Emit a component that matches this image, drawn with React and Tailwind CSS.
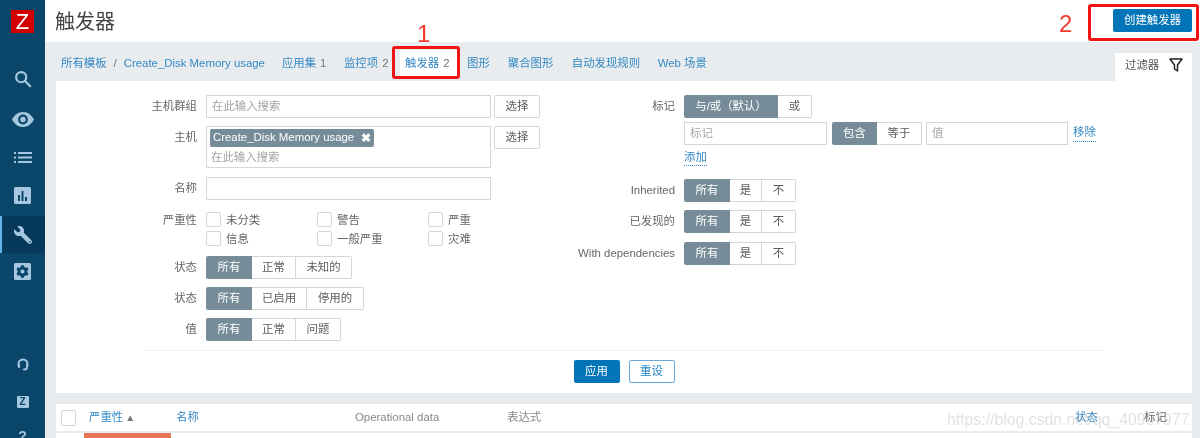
import React from "react";
import { FaWrench, FaCog } from "react-icons/fa";

const Seg = ({ items, mt = "" }) => (
  <div className={`flex h-[23px] ${mt}`}>
    {items.map(([t, w], i) => (
      <div
        key={t}
        style={{ width: w }}
        className={
          i === 0
            ? "flex items-center justify-center rounded-l-[2px] bg-[#768d99] text-white"
            : "flex items-center justify-center border border-l-0 border-[#d3d7d9] bg-white text-[#5c5c5c] last:rounded-r-[2px]"
        }
      >
        {t}
      </div>
    ))}
  </div>
);

const Label = ({ children, w }) => (
  <div className={`${w} shrink-0 pt-[3px] pr-[9px] text-right leading-[17px] text-[#666]`}>{children}</div>
);

const Row = ({ label, w = "w-[150px]", mt = "", children }) => (
  <div className={`flex ${mt}`}>
    <Label w={w}>{label}</Label>
    {children}
  </div>
);

const Input = ({ className = "", ph }) => (
  <div className={`flex h-[23px] items-center border border-[#d3d7d9] bg-white px-[5px] text-[#a5a5a5] ${className}`}>{ph}</div>
);

const Btn = ({ children }) => (
  <div className="ml-[3px] flex h-[23px] w-[46px] items-center justify-center rounded-[2px] border border-[#d3d7d9] bg-white text-[#5c5c5c]">
    {children}
  </div>
);

const Check = ({ t }) => (
  <div className="flex h-[19px] w-[111px] items-start">
    <div className="h-[15px] w-[15px] rounded-[2px] border border-[#d3d7d9] bg-white" />
    <span className="ml-[5px] leading-[16px] text-[#666]">{t}</span>
  </div>
);

const Tab = ({ children, active }) => (
  <div
    className={
      active
        ? "flex h-[27px] items-center bg-white pl-[5px] pr-[7px] text-[#3489c4]"
        : "flex h-[27px] items-center px-[5px] text-[#3489c4]"
    }
  >
    {children}
  </div>
);

const Num = ({ children }) => <span className="ml-[4px] text-[#777]">{children}</span>;

function Sidebar() {
  const c = "#a5c8e0";
  return (
    <div className="flex h-full w-[45px] shrink-0 flex-col items-center overflow-hidden bg-[#0a466a] [&>*]:shrink-0">
      <div className="mt-[10px] flex h-[23px] w-[23px] items-center justify-center bg-[#d40000] [font-family:'Liberation_Sans',sans-serif] text-[22px] leading-none text-white">
        Z
      </div>
      <svg className="mt-[37px]" width="18" height="18" viewBox="0 0 20 20" fill="none" stroke={c} strokeWidth="2.4">
        <circle cx="8" cy="8" r="5.6" />
        <path d="M12 12l6 6" strokeLinecap="round" />
      </svg>
      <svg className="mt-[24px]" width="22" height="15" viewBox="0 0 22 15" fill={c}>
        <path fillRule="evenodd" d="M11 0C5.8 0 2 3.6 0 7.5 2 11.400 5.800 15 11 15s9-3.600 11-7.500C20 3.600 16.200 0 11 0zm0 2.600a4.900 4.900 0 110 9.800 4.900 4.900 0 010-9.800z" />
        <circle cx="11" cy="7.500" r="2.700" />
      </svg>
      <svg className="mt-[25px]" width="18" height="11" viewBox="0 0 18 11" fill={c}>
        <rect x="0" y="0" width="2" height="2" />
        <rect x="4" y="0" width="14" height="2" />
        <rect x="0" y="4.500" width="2" height="2" />
        <rect x="4" y="4.500" width="14" height="2" />
        <rect x="0" y="9" width="2" height="2" />
        <rect x="4" y="9" width="14" height="2" />
      </svg>
      <svg className="mt-[24px]" width="17" height="17" viewBox="0 0 17 17">
        <rect width="17" height="17" rx="1.500" fill={c} />
        <rect x="4" y="8" width="2" height="6" fill="#0a466a" />
        <rect x="7.500" y="4" width="2" height="10" fill="#0a466a" />
        <rect x="11" y="10" width="2" height="4" fill="#0a466a" />
      </svg>
      <div className="mt-[12px] flex h-[37px] w-full items-center justify-center border-l-2 border-[#5fb5ea] bg-[#073a5a] pr-[2px]">
        <FaWrench size={18} color={c} className="-scale-x-100" />
      </div>
      <div className="mt-[10px] flex h-[17px] w-[17px] items-center justify-center rounded-[1.500px] bg-[#a5c8e0]">
        <FaCog size={13} color="#0a466a" />
      </div>
      <svg className="mt-[78px]" width="12" height="13" viewBox="0 0 12 13" fill="none" stroke={c} strokeWidth="2">
        <path d="M1.500 8V6a4.500 4.500 0 019 0v2" />
        <path d="M2 7v2M10 7v2M10 9.500c0 1.500-1.500 2-3 2" strokeLinecap="round" />
      </svg>
      <div className="mt-[25px] flex h-[12px] w-[12px] items-center justify-center rounded-[1px] bg-[#a5c8e0] [font-family:'Liberation_Sans',sans-serif] text-[10px] font-bold leading-none text-[#0a466a]">
        Z
      </div>
      <div className="mt-[21px] [font-family:'Liberation_Sans',sans-serif] text-[14px] font-bold leading-none text-[#a5c8e0]">?</div>
    </div>
  );
}

export default function App() {
  return (
    <div className="relative flex h-[438px] w-[1200px] overflow-hidden bg-[#e9ecee] [font-family:'Liberation_Sans','Noto_Sans_CJK_SC',sans-serif] text-[11.4px] blur-[0.5px]">
      <Sidebar />
      <div className="flex min-w-0 flex-1 flex-col">
        {/* header */}
        <div className="flex h-[42px] shrink-0 items-start justify-between bg-white pl-[10px] pr-[8px]">
          <div className="mt-[8px] text-[20px] leading-[28px] text-[#444]">触发器</div>
          <div className="mt-[9px] flex h-[23px] w-[79px] items-center justify-center rounded-[2px] bg-[#0275b8] text-white">
            创建触发器
          </div>
        </div>

        {/* tabs */}
        <div className="ml-[11px] mr-[8px] flex h-[39px] shrink-0 items-end justify-between">
          <div className="mb-[4px] flex items-center">
            <Tab>所有模板</Tab>
            <span className="mx-[2px] text-[#777]">/</span>
            <Tab>Create_Disk Memory usage</Tab>
            <div className="w-[7px]" />
            <Tab>
              应用集<Num>1</Num>
            </Tab>
            <div className="w-[7.5px]" />
            <Tab>
              监控项<Num>2</Num>
            </Tab>
            <div className="w-[6.5px]" />
            <Tab active>
              触发器<Num>2</Num>
            </Tab>
            <div className="w-[5.5px]" />
            <Tab>图形</Tab>
            <div className="w-[8px]" />
            <Tab>聚合图形</Tab>
            <div className="w-[8.4px]" />
            <Tab>自动发现规则</Tab>
            <div className="w-[7.6px]" />
            <Tab>Web 场景</Tab>
          </div>
          <div className="flex h-[28px] w-[77px] items-center justify-between bg-white pb-[3px] pl-[10px] pr-[9px] text-[#555]">
            过滤器
            <svg className="-mt-[2px]" width="14" height="14" viewBox="0 0 14 14" fill="none" stroke="#222" strokeWidth="1.500" strokeLinejoin="round">
              <path d="M1 1h12L8.500 7v6L5.500 11V7z" />
            </svg>
          </div>
        </div>

        {/* filter panel */}
        <div className="ml-[11px] mr-[8px] shrink-0 bg-white pb-[10px] pt-[14px]">
          <div className="flex">
            <div className="w-[484px] shrink-0">
              <Row label="主机群组" w="w-[150px]">
                <Input className="w-[285px]" ph="在此输入搜索" />
                <Btn>选择</Btn>
              </Row>
              <Row label="主机" mt="mt-[8px]">
                <div className="h-[42px] w-[285px] border border-[#d3d7d9] bg-white px-[3px] pt-[2px]">
                  <div className="flex h-[18px] w-fit items-center rounded-[2px] bg-[#768d99] px-[3px] font-medium text-white">
                    Create_Disk Memory usage
                    <span className="ml-[7px] text-[12px] font-bold leading-none">✖</span>
                  </div>
                  <div className="mt-[2px] px-[1px] leading-[16px] text-[#a5a5a5]">在此输入搜索</div>
                </div>
                <Btn>选择</Btn>
              </Row>
              <Row label="名称" mt="mt-[9px]">
                <Input className="w-[285px]" />
              </Row>
              <div className="mt-[12px] flex">
                <div className="w-[150px] shrink-0 pr-[9px] text-right leading-[16px] text-[#666]">严重性</div>
                <div className="grid w-[333px] grid-cols-3">
                  <Check t="未分类" />
                  <Check t="警告" />
                  <Check t="严重" />
                  <Check t="信息" />
                  <Check t="一般严重" />
                  <Check t="灾难" />
                </div>
              </div>
              <Row label="状态" mt="mt-[6px]">
                <Seg items={[["所有", 46], ["正常", 44], ["未知的", 56]]} />
              </Row>
              <Row label="状态" mt="mt-[8px]">
                <Seg items={[["所有", 46], ["已启用", 55], ["停用的", 57]]} />
              </Row>
              <Row label="值" mt="mt-[8px]">
                <Seg items={[["所有", 46], ["正常", 44], ["问题", 45]]} />
              </Row>
            </div>
            <div className="flex-1">
              <Row label="标记" w="w-[144px]">
                <Seg items={[["与/或（默认）", 94], ["或", 34]]} />
              </Row>
              <div className="mt-[4px] flex pl-[144px]">
                <Input className="w-[143px]" ph="标记" />
                <Seg mt="ml-[5px]" items={[["包含", 45], ["等于", 45]]} />
                <Input className="ml-[4px] w-[142px]" ph="值" />
                <span className="ml-[5px] mt-[3px] h-[17px] border-b border-dotted border-[#3489c4] leading-[15px] text-[#3489c4]">移除</span>
              </div>
              <div className="mt-[4px] pl-[144px]">
                <span className="inline-block border-b border-dotted border-[#3489c4] leading-[16px] text-[#3489c4]">添加</span>
              </div>
              <Row label="Inherited" w="w-[144px]" mt="mt-[13px]">
                <Seg items={[["所有", 46], ["是", 32], ["不", 34]]} />
              </Row>
              <Row label="已发现的" w="w-[144px]" mt="mt-[8px]">
                <Seg items={[["所有", 46], ["是", 32], ["不", 34]]} />
              </Row>
              <Row label="With dependencies" w="w-[144px]" mt="mt-[9px]">
                <Seg items={[["所有", 46], ["是", 32], ["不", 34]]} />
              </Row>
            </div>
          </div>
          <div className="ml-[88px] mr-[88px] mt-[9px] border-t border-[#f1f2f3]" />
          <div className="mt-[9px] flex justify-center gap-[9px]">
            <div className="flex h-[23px] w-[46px] items-center justify-center rounded-[2px] bg-[#0275b8] text-white">应用</div>
            <div className="flex h-[23px] w-[46px] items-center justify-center rounded-[2px] border border-[#6fa8d6] bg-white text-[#1a7fc0]">重设</div>
          </div>
        </div>

        {/* table */}
        <div className="ml-[11px] mr-[8px] mt-[11px] flex h-[27px] shrink-0 items-center bg-white pl-[5px] text-[#888]">
          <div className="h-[16px] w-[15px] rounded-[2px] border border-[#d3d7d9]" />
          <div className="ml-[13px] flex w-[87px] items-center text-[#3489c4]">
            严重性
            <span className="ml-[2px] text-[10px] text-[#777]">▲</span>
          </div>
          <div className="w-[179px] text-[#3489c4]">名称</div>
          <div className="w-[152px]">Operational data</div>
          <div className="w-[568px]">表达式</div>
          <div className="w-[69px] text-[#3489c4]">状态</div>
          <div className="text-[#666]">标记</div>
        </div>
        <div className="ml-[11px] mr-[8px] mt-[2px] flex-1 bg-white pl-[28px]">
          <div className="h-full w-[87px] bg-[#e97659]" />
        </div>
      </div>

      {/* annotations over the picture */}
      <div className="absolute left-[392px] top-[46px] h-[33px] w-[68px] rounded-[3px] border-[3px] border-[#f01414]" />
      <div className="absolute left-[1088px] top-[4px] h-[37px] w-[111px] rounded-[3px] border-[3px] border-[#f01414]" />
      <div className="absolute left-[417px] top-[20px] text-[24px] leading-[28px] text-[#f03a2e]">1</div>
      <div className="absolute left-[1059px] top-[10px] text-[24px] leading-[28px] text-[#f03a2e]">2</div>
      <div className="absolute left-[947px] top-[409px] text-[15.8px] leading-[22px] text-[#9a9a9a]/30">https://blog.csdn.net/qq_40907977</div>
    </div>
  );
}
